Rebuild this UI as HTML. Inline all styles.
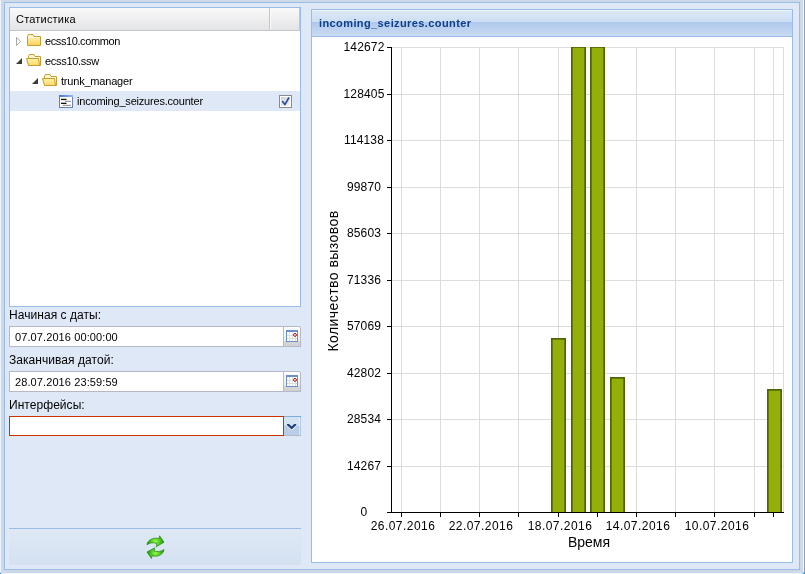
<!DOCTYPE html>
<html>
<head>
<meta charset="utf-8">
<title>Статистика</title>
<style>
html,body{margin:0;padding:0;}
body{width:805px;height:574px;overflow:hidden;background:#ced9e7;font-family:"Liberation Sans",sans-serif;font-size:11px;color:#000;}
#root{position:absolute;left:0;top:0;width:805px;height:574px;overflow:hidden;background:#ced9e7;}
.abs{position:absolute;}
.t{position:absolute;white-space:nowrap;line-height:14px;height:14px;will-change:transform;}
/* window edges */
#wl{left:0;top:0;width:1px;height:574px;background:#eef2f9;}
#wr1{left:803px;top:0;width:1px;height:574px;background:#f1f5fb;}
#wr2{left:804px;top:0;width:1px;height:574px;background:#8fa0c1;}
#wb{left:0;top:573px;width:805px;height:1px;background:#eef2f9;}
/* main panel */
#main{left:4px;top:2px;width:794px;height:566px;border:1px solid #99bce8;background:#dfe8f6;}
/* tree panel */
#tree{left:9px;top:7px;width:290px;height:298px;border:1px solid #99bce8;background:#fff;}
#thead{left:10px;top:8px;width:290px;height:22px;background:linear-gradient(#f9f9f9,#e3e4e6);border-bottom:1px solid #c5c5c5;}
.csep{top:8px;width:1px;height:22px;background:#c5c5c5;}
.csepw{top:8px;width:1px;height:22px;background:#fbfbfb;}
#sel{left:10px;top:91px;width:290px;height:20px;background:#dfe8f6;}
/* fields */
.fld{height:19px;background:#fff;border:1px solid #b5b8c8;left:9px;width:273px;}
.trg{left:284px;width:17px;height:21px;}
/* toolbar */
#tb{left:9px;top:528px;width:292px;height:36px;border-top:1px solid #99bce8;background:linear-gradient(#dfe9f5,#d3e1f1);}
/* chart panel */
#cp{left:311px;top:9px;width:480px;height:552px;border:1px solid #99bce8;background:#fff;}
#ch{left:312px;top:10px;width:480px;height:26px;border-bottom:1px solid #99bce8;background:linear-gradient(#f0f5fb 0,#f0f5fb 1px,#dae7f6 1px,#cddef3 12px,#abc7ec 12px,#b3cbed 14px,#c9dbf2 26px);}
#cht{left:319px;top:16px;font-weight:bold;color:#0f3f8a;font-size:11px;}
</style>
</head>
<body>
<div id="root">
  <div class="abs" id="wl"></div>
  <div class="abs" id="wr1"></div>
  <div class="abs" id="wr2"></div>
  <div class="abs" id="wb"></div>
  <div class="abs" id="main"></div>
  <svg class="abs" style="left:0;top:568px" width="805" height="6" viewBox="0 568 805 6"><path d="M805 571.2 V574 H802.2 Z" fill="#3d9bd1"/><path d="M0 572 V574 H1.6 Z" fill="#3d9bd1"/></svg>

  <!-- tree panel -->
  <div class="abs" id="tree"></div>
  <div class="abs" id="thead"></div>
  <div class="abs csep" style="left:269px"></div>
  <div class="abs csepw" style="left:270px"></div>
  <div class="abs csep" style="left:299px"></div>
  <div class="t" id="tt0" style="left:15.5px;top:12px;">Статистика</div>
  <div class="abs" id="sel"></div>
  <div class="t" id="tt1" style="left:45px;top:34px;">ecss10.common</div>
  <div class="t" id="tt2" style="left:45px;top:54px;">ecss10.ssw</div>
  <div class="t" id="tt3" style="left:61px;top:74px;">trunk_manager</div>
  <div class="t" id="tt4" style="left:77px;top:94px;">incoming_seizures.counter</div>

  <!-- tree icons -->
  <svg class="abs" style="left:0;top:0" width="320" height="120" viewBox="0 0 320 120">
    <defs>
      <linearGradient id="gf" x1="0" y1="0" x2="0" y2="1"><stop offset="0" stop-color="#fff8c8"/><stop offset="1" stop-color="#ffd257"/></linearGradient>
      <linearGradient id="gf2" x1="0" y1="0" x2="0" y2="1"><stop offset="0" stop-color="#fff3a8"/><stop offset="1" stop-color="#ffd964"/></linearGradient>
      <linearGradient id="gl" x1="0" y1="0" x2="1" y2="0"><stop offset="0" stop-color="#4474d6"/><stop offset="1" stop-color="#94b8f2"/></linearGradient>
      <linearGradient id="gc" x1="0" y1="0" x2="1" y2="1"><stop offset="0" stop-color="#cfd3d8"/><stop offset="1" stop-color="#f6f6f6"/></linearGradient>
      <g id="fclosed">
        <path d="M0.5 11.5 V2.2 L1.5 0.5 H6 L7 2.5 H13.5 V11.5 Z" fill="url(#gf)" stroke="#c89b33" stroke-width="1"/>
        <path d="M1.5 3.5 H12.5" stroke="#fffbe0" stroke-width="1" fill="none"/>
      </g>
      <g id="fopen">
        <path d="M2.5 11.5 V2.2 L3.5 0.5 H8 L9 2.5 H14.5 V11.5 Z" fill="#fff9d6" stroke="#c89b33" stroke-width="1"/>
        <path d="M0.5 4.5 H12.5 L13.5 11.5 H2.5 Z" fill="url(#gf2)" stroke="#c89b33" stroke-width="1" stroke-linejoin="round"/>
      </g>
      <path id="aexp" d="M6 0 V6 H0 Z" fill="#3c3c3c"/>
    </defs>
    <!-- row1 -->
    <path d="M16.5 37.5 V45.5 L20.8 41.5 Z" fill="#fff" stroke="#a8a8a8" stroke-width="1"/>
    <use href="#fclosed" x="27" y="34"/>
    <!-- row2 -->
    <use href="#aexp" x="16" y="58"/>
    <use href="#fopen" x="26" y="54"/>
    <!-- row3 -->
    <use href="#aexp" x="32" y="78"/>
    <use href="#fopen" x="42" y="74"/>
    <!-- row4 leaf -->
    <rect x="59.5" y="95.5" width="13" height="12" fill="#fff" stroke="#6a80b3" stroke-width="1"/>
    <rect x="59" y="95" width="14" height="2" fill="url(#gl)"/>
    <rect x="61" y="98.8" width="5.5" height="1.3" fill="#111"/>
    <rect x="65" y="100.8" width="6" height="1.1" fill="#8f8f8f"/>
    <rect x="61" y="102.7" width="5.5" height="1.3" fill="#111"/>
    <rect x="63" y="104.8" width="8" height="1.1" fill="#8f8f8f"/>
    <!-- checkbox -->
    <rect x="279.5" y="95.5" width="12" height="12" fill="#fff" stroke="#8b8b8b" stroke-width="1"/>
    <rect x="281" y="97" width="9" height="9" fill="url(#gc)"/>
    <path d="M282.6 101.6 L284.9 104.6 L288.7 98" fill="none" stroke="#2f4fa3" stroke-width="1.7" stroke-linecap="round" stroke-linejoin="round"/>
  </svg>

  <!-- form -->
  <div class="t" id="lb1" style="left:9px;top:308px;font-size:12px;">Начиная с даты:</div>
  <div class="abs fld" style="top:326px"></div>
  <div class="t" id="fv1" style="left:15px;top:330px;">07.07.2016 00:00:00</div>
  <div class="t" id="lb2" style="left:9px;top:353px;font-size:12px;">Заканчивая датой:</div>
  <div class="abs fld" style="top:371px"></div>
  <div class="t" id="fv2" style="left:15px;top:375px;">28.07.2016 23:59:59</div>
  <div class="t" id="lb3" style="left:9px;top:398px;font-size:12px;">Интерфейсы:</div>
  <div class="abs fld" style="top:416px;border-color:#cc3300;height:18px;background:#fff;"></div>

  <!-- triggers -->
  <svg class="abs" style="left:280px;top:320px" width="30" height="125" viewBox="280 320 30 125">
    <defs>
      <linearGradient id="gt" x1="0" y1="0" x2="0" y2="1"><stop offset="0" stop-color="#ffffff"/><stop offset="0.75" stop-color="#ececec"/><stop offset="0.76" stop-color="#d6d6d6"/><stop offset="1" stop-color="#d2d2d2"/></linearGradient>
      <g id="dtrg">
        <path d="M0 0 H15.5 L17 1.5 V21 H0 Z" fill="#b5b8c8"/>
        <path d="M0 1 H15.2 L16 1.8 V20 H0 Z" fill="url(#gt)"/>
        <rect x="2.5" y="4.5" width="11" height="11" fill="#fff" stroke="#6d8fc9" stroke-width="1"/>
        <rect x="2" y="4" width="12" height="2" fill="#6d8fc9"/>
        <path d="M5.5 6 V15 M8.5 6 V15 M11.5 9 V15 M3 9.5 H13 M3 12.5 H13" stroke="#dedede" stroke-width="1" fill="none"/>
        <circle cx="11" cy="8.9" r="1.45" fill="#fff" stroke="#9e0f1a" stroke-width="1"/>
      </g>
    </defs>
    <use href="#dtrg" x="284" y="326"/>
    <use href="#dtrg" x="284" y="371"/>
    <!-- combo trigger -->
    <path d="M284 416 H301 V436 H284 Z" fill="#7eadd9"/>
    <path d="M284 417 H299.2 L300 417.8 V426.5 H284 Z" fill="#d5e2f2"/>
    <path d="M284 426.5 H300 V435 H284 Z" fill="#b9cfe9"/>
    <rect x="284" y="435" width="17" height="1" fill="#b5b8c8"/>
    <path d="M299 417 L300 418 V435" stroke="#f4f8fd" stroke-width="1" fill="none" opacity="0.9"/>
    <path d="M287 425 H289 L291.6 427.6 L294.2 425 H296.2 V426.2 L291.6 430.6 L287 426.2 Z" fill="#fff"/>
    <path d="M287 424 H289 L291.6 426.6 L294.2 424 H296.2 V425.2 L291.6 429.6 L287 425.2 Z" fill="#1f3f7f"/>
  </svg>

  <!-- toolbar -->
  <div class="abs" id="tb"></div>
  <svg class="abs" style="left:143px;top:532px" width="26" height="30" viewBox="143 532 26 30">
    <defs>
      <radialGradient id="gg1" gradientUnits="userSpaceOnUse" cx="155.5" cy="541.5" r="9.5"><stop offset="0" stop-color="#93f852"/><stop offset="0.4" stop-color="#5ad026"/><stop offset="0.85" stop-color="#1f8f0a"/><stop offset="1" stop-color="#167a05"/></radialGradient>
      <radialGradient id="gg2" gradientUnits="userSpaceOnUse" cx="155.5" cy="553.2" r="9.5"><stop offset="0" stop-color="#93f852"/><stop offset="0.4" stop-color="#5ad026"/><stop offset="0.85" stop-color="#1f8f0a"/><stop offset="1" stop-color="#167a05"/></radialGradient>
    </defs>
    <path d="M147 544.8 C147.5 540.2 152 538 156.5 538.2 L159 538.6 L159.6 535.8 L164 542.2 L156.2 546.8 L156.9 543.4 C153 542.2 149.6 542.8 147 544.8 Z" fill="url(#gg1)" stroke="#218a0d" stroke-width="0.7" stroke-linejoin="round"/>
    <path d="M164 549.4 C163.5 554 159 556.4 154.5 556.2 L152 555.8 L151.4 558.6 L147 552 L154.8 547.8 L154.1 551 C158 552.2 161.4 551.4 164 549.4 Z" fill="url(#gg2)" stroke="#218a0d" stroke-width="0.7" stroke-linejoin="round"/>
  </svg>

  <!-- chart panel -->
  <div class="abs" id="cp"></div>
  <div class="abs" id="ch"></div>
  <div class="t" id="cht">incoming_seizures.counter</div>

  <svg class="abs" style="left:312px;top:37px" width="480" height="525" viewBox="312 37 480 525" shape-rendering="crispEdges">
    <g stroke="#dcdcdc" stroke-width="1" fill="none">
      <path d="M392 47.5 H784 M392 94.5 H784 M392 140.5 H784 M392 187.5 H784 M392 233.5 H784 M392 280.5 H784 M392 326.5 H784 M392 373.5 H784 M392 419.5 H784 M392 466.5 H784"/>
      <path d="M401.5 47 V512 M440.5 47 V512 M479.5 47 V512 M518.5 47 V512 M558.5 47 V512 M597.5 47 V512 M636.5 47 V512 M675.5 47 V512 M714.5 47 V512 M754.5 47 V512 M773.5 47 V512 M783.5 47 V512"/>
    </g>
    <clipPath id="cb"><rect x="392" y="47" width="392" height="465"/></clipPath>
    <g fill="#94ae0a" stroke="#4f6404" stroke-width="1.7" shape-rendering="geometricPrecision" clip-path="url(#cb)">
      <rect x="551.85" y="338.85" width="13.3" height="180"/>
      <rect x="571.85" y="46.95" width="13.3" height="480"/>
      <rect x="590.85" y="46.95" width="13.3" height="480"/>
      <rect x="610.85" y="377.85" width="13.3" height="140"/>
      <rect x="767.85" y="389.85" width="13.3" height="130"/>
    </g>
    <g stroke="#000" stroke-width="1" fill="none">
      <path d="M391.5 47 V513 M387 512.5 H784"/>
      <path d="M387 47.5 H391 M387 94.5 H391 M387 140.5 H391 M387 187.5 H391 M387 233.5 H391 M387 280.5 H391 M387 326.5 H391 M387 373.5 H391 M387 419.5 H391 M387 466.5 H391"/>
      <path d="M401.5 513 V517 M440.5 513 V517 M479.5 513 V517 M518.5 513 V517 M558.5 513 V517 M597.5 513 V517 M636.5 513 V517 M675.5 513 V517 M714.5 513 V517 M754.5 513 V517 M773.5 513 V517"/>
    </g>
  </svg>
  <!-- axis labels -->
  <div id="ylabels">
    <div class="t yl" style="top:40px">142672</div>
    <div class="t yl" style="top:87px">128405</div>
    <div class="t yl" style="top:133px">114138</div>
    <div class="t yl" style="top:180px">99870</div>
    <div class="t yl" style="top:226px">85603</div>
    <div class="t yl" style="top:273px">71336</div>
    <div class="t yl" style="top:319px">57069</div>
    <div class="t yl" style="top:366px">42802</div>
    <div class="t yl" style="top:412px">28534</div>
    <div class="t yl" style="top:459px">14267</div>
    <div class="t yl" style="top:505px">0</div>
  </div>
  <div id="xlabels">
    <div class="t xl" style="left:352.5px">26.07.2016</div>
    <div class="t xl" style="left:430.5px">22.07.2016</div>
    <div class="t xl" style="left:509.5px">18.07.2016</div>
    <div class="t xl" style="left:587.5px">14.07.2016</div>
    <div class="t xl" style="left:666.5px">10.07.2016</div>
  </div>
  <div class="t" id="xt" style="left:538.5px;top:534px;width:100px;text-align:center;font-size:14px;line-height:16px;height:16px;">Время</div>
  <div class="t" id="yt" style="left:261.5px;top:273px;width:142px;text-align:center;font-size:14px;line-height:16px;height:16px;transform:rotate(-90deg);letter-spacing:0.45px;">Количество вызовов</div>
</div>
<style>
.yl{left:313.6px;width:100px;text-align:center;font-size:12px;letter-spacing:0.15px;}
.xl{top:519px;width:100px;text-align:center;font-size:12px;letter-spacing:0.45px;}
#tt0{letter-spacing:0.2px}
#tt1{letter-spacing:-0.4px}
#tt2{letter-spacing:-0.3px}
#tt3{letter-spacing:-0.2px}
#tt4{letter-spacing:-0.2px}
#cht{letter-spacing:0.4px}
#fv1,#fv2{letter-spacing:0.1px}
#lb1,#lb2,#lb3{letter-spacing:0.05px}
</style>
</body>
</html>
